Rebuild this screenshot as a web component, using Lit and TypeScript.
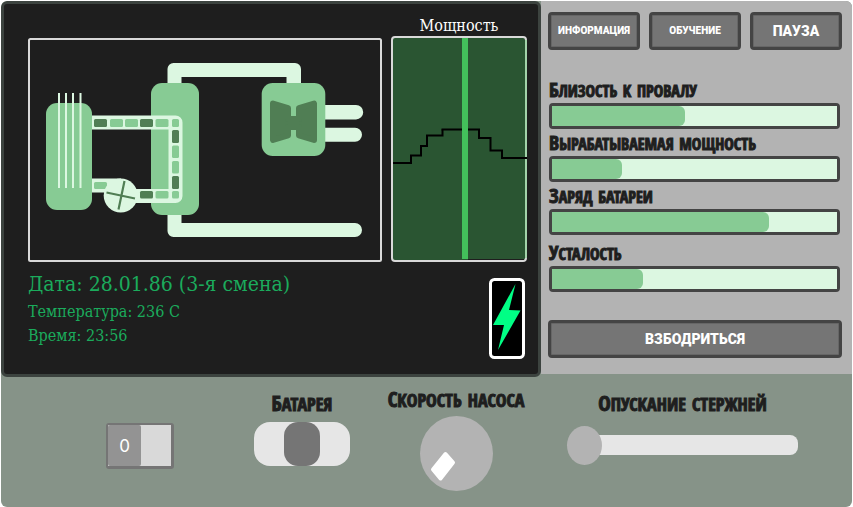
import { LitElement, html, svg, css } from "lit";
import { customElement, property } from "lit/decorators.js";

interface Gauge {
  id: string;
  label: string;
  value: number;
}

const GAUGES: Gauge[] = [
  { id: "failure", label: "Близость к провалу", value: 46.5 },
  { id: "output", label: "Вырабатываемая мощность", value: 24.5 },
  { id: "charge", label: "Заряд батареи", value: 76 },
  { id: "fatigue", label: "Усталость", value: 32 },
];

// x, y, width, height, dark
const CELLS: [number, number, number, number, boolean][] = [
  [94, 119, 13, 8, true],
  [110, 119, 13, 8, false],
  [125, 119, 13, 8, false],
  [140, 119, 13, 8, true],
  [155.5, 119, 13, 8, false],
  [172, 119, 7, 8, false],
  [172, 130, 7, 13, true],
  [172, 145.5, 7, 12.5, false],
  [172, 161, 7, 12.5, false],
  [172, 176, 7, 13, true],
  [172, 191, 7, 7.5, false],
  [155.5, 191, 13, 7.5, false],
  [140, 191, 13, 7.5, true],
  [94, 182, 13, 7, false],
];

@customElement("reactor-diagram")
export class ReactorDiagram extends LitElement {
  static styles = css`
    :host { display: block; }
    .art { display: block; width: 100%; height: auto; }
  `;
  render() {
    return html`<svg class="art" viewBox="28 38 354 224" role="img" aria-label="Схема реактора">
      <rect x="29" y="39" width="352" height="222" rx="1.5" fill="none" stroke="#d9d9d9" stroke-width="2" />
      <path fill="#dcf7e1" d="M167.5 84V69a6 6 0 0 1 6-6H295a6 6 0 0 1 6 6V84H286.500V77H181.500V84Z" />
      <path fill="#dcf7e1" d="M167.500 214V231a6 6 0 0 0 6 6H355a7 7 0 0 0 0-14H181.500V214Z" />
      <rect x="151" y="83" width="48" height="132" rx="11" fill="#87cb94" />
      <rect x="46" y="103" width="46" height="107" rx="11" fill="#87cb94" />
      <path d="M59 93V188M66 93V188M73 93V188M80.500 93V188" stroke="#dcf7e1" stroke-width="2" />
      <path d="M92 122.500H175.500V196H125" fill="none" stroke="#dcf7e1" stroke-width="14" stroke-linejoin="round" />
      <path d="M92 178.500H121V192.500H92Z" fill="#dcf7e1" />
      ${CELLS.map(([x, y, w, h, dark]) => svg`<rect x=${x} y=${y} width=${w} height=${h} rx="1.500" fill=${dark ? "#507e54" : "#87cb94"} />`)}
      <circle cx="120.700" cy="195.500" r="17" fill="#dcf7e1" />
      <path d="M106.500 192.500L135 198.500M124.500 181L118.500 209.500" stroke="#507e54" stroke-width="2.200" />
      <path d="M325 105H356a7.200 7.200 0 0 1 0 14.400H325ZM325 127.700H355a7 7 0 0 1 0 14H325Z" fill="#dcf7e1" />
      <rect x="261.700" y="83" width="63.600" height="73" rx="11" fill="#87cb94" />
      <path d="M273 103.500L288 108V119H299V108L314 103.500V140L299 135.500V127H288V135.500L273 140Z" fill="#507e54" stroke="#507e54" stroke-width="6" stroke-linejoin="round" />
      <path d="M291 98V116H296V98ZM291 130V144H296V130Z" fill="#87cb94" />
    </svg>`;
  }
}

@customElement("power-graph")
export class PowerGraph extends LitElement {
  static styles = css`
    :host { display: block; }
    .art { display: block; width: 100%; height: auto; }
  `;
  render() {
    return html`<svg class="art" viewBox="391 36 136 226" role="img" aria-label="График мощности">
      <rect x="392" y="37" width="134" height="224" rx="3" fill="#2a5532" stroke="#d9d9d9" stroke-width="2" />
      <path d="M526 40V258" stroke="#a3d3aa" stroke-width="2" />
      <path d="M468 259.500H524" stroke="#1e1e1e" />
      <path d="M393 163H411V155.500H421V146H427V135.500H442.500V129.500" fill="none" stroke="#000" stroke-width="2" />
      <path d="M441.500 129.500H479V138H490.500V150.500H502V158H527" fill="none" stroke="#000" stroke-width="2" />
      <rect x="462" y="38" width="6" height="221" fill="#43c05b" />
    </svg>`;
  }
}

@customElement("gauge-bar")
export class GaugeBar extends LitElement {
  @property() label = "";
  @property({ type: Number }) value = 0;
  static styles = css`
    :host { display: flex; flex-direction: column; gap: 2px; }
    .label {
      display: block;
      height: 20px;
      font: 800 23px/14px "Open Sans Condensed", "Liberation Sans Narrow", "Noto Sans", sans-serif;
      font-variant: small-caps;
      color: #1e1e1e;
      -webkit-text-stroke: 1px #1e1e1e;
      white-space: nowrap;
    }
    .label::first-letter { font-size: 20px; }
    .bar {
      appearance: none;
      display: block;
      box-sizing: border-box;
      width: 100%;
      height: 26px;
      border: 3px solid #444;
      border-radius: 4px;
      background: #dcf7e1;
    }
    .bar::-webkit-progress-bar { background: #dcf7e1; }
    .bar::-webkit-progress-value { background: #87cb94; border-radius: 0 6px 6px 0; }
  `;
  render() {
    return html`<label class="label" for="bar">${this.label}</label>
      <progress class="bar" id="bar" max="100" .value=${this.value}></progress>`;
  }
}

@customElement("app-root")
export class AppRoot extends LitElement {
  static styles = css`
    :host {
      display: block;
      box-sizing: border-box;
      min-height: 100vh;
      padding: 1px 1px 0;
      background: #fff;
      font-family: Roboto, "Open Sans", sans-serif;
      color: #1e1e1e;
    }
    .console {
      min-height: calc(100vh - 1px);
      border-radius: 6px;
      background: #869388;
      overflow: hidden;
    }
    .top { display: grid; grid-template-columns: 540fr 311fr; align-items: start; }
    .screen {
      box-sizing: border-box;
      padding: 11px 11px 15px 24px;
      border: 3px solid #3c433f;
      border-radius: 6px;
      background: #1e1e1e;
    }
    .displays { display: grid; grid-template-columns: 354fr 136fr; column-gap: 9px; align-items: end; }
    .title {
      margin: 0;
      font: 400 16px/21px "DejaVu Serif Condensed", "DejaVu Serif", serif;
      text-align: center;
      color: #fff;
    }
    .readout { display: flex; justify-content: space-between; align-items: flex-end; padding: 10px 2px 0 0; }
    .facts {
      margin: 0;
      align-self: flex-start;
      font: 400 16px/24px "DejaVu Serif Condensed", "DejaVu Serif", serif;
      color: #1bab5c;
    }
    .fact { margin: 0; white-space: nowrap; }
    .date { margin-bottom: 4px; font-size: 21px; }
    .battery { display: block; width: 36px; height: 81px; margin-top: 6px; }

    .side {
      box-sizing: border-box;
      min-height: 373px;
      padding: 11px 10px 16px 7px;
      background: #b3b3b3;
      display: flex;
      flex-direction: column;
    }
    .menu { display: grid; grid-template-columns: repeat(3, 1fr); gap: 9px; }
    .button {
      box-sizing: border-box;
      height: 38px;
      padding: 0;
      border: 3px solid #444;
      border-radius: 4px;
      background: #757575;
      box-shadow: inset 0 0 0 1px #666;
      font: 900 14px/20px Roboto, sans-serif;
      text-transform: uppercase;
      color: #fff;
    }
    .small { font-size: 10px; }
    .gauges { display: flex; flex-direction: column; gap: 5px; margin: 31px 2px 28px 1px; }
    .last { margin-top: 4px; }

    .controls {
      display: grid;
      grid-template-columns: minmax(0, 160fr) minmax(0, 164fr) minmax(0, 144fr) minmax(0, 309fr);
      align-items: start;
      padding: 13px 15px 15px 59px;
    }
    .control { display: flex; flex-direction: column; align-items: center; }
    .lowered { margin-top: 4px; }
    .name {
      display: block;
      height: 20px;
      font: 800 25px/14px "Open Sans Condensed", "Liberation Sans Narrow", "Noto Sans", sans-serif;
      font-variant: small-caps;
      -webkit-text-stroke: 1px #1e1e1e;
      white-space: nowrap;
    }
    .name::first-letter { font-size: 21px; }

    .switch {
      box-sizing: border-box;
      display: flex;
      justify-self: center;
      width: 68px;
      height: 46px;
      margin-top: 33px;
      border: 2px solid #757575;
      border-right-width: 3px;
      border-bottom-width: 3px;
      border-radius: 3px;
      background: #d9d9d9;
    }
    .check { appearance: none; width: 0; height: 0; margin: 0; }
    .knob {
      width: 33px;
      border-radius: 2px;
      background: #939393;
      font: 400 17px/42px Inter, sans-serif;
      text-align: center;
      color: #fff;
    }

    .tri {
      appearance: none;
      width: 96px;
      height: 44px;
      margin: 8px 0 0;
      border-radius: 16px;
      background: #e6e6e6;
    }
    .tri::-webkit-slider-thumb {
      appearance: none;
      width: 36px;
      height: 44px;
      border-radius: 14px;
      background: #757575;
    }

    .dial { position: relative; width: 73px; height: 75px; margin-top: 6px; }
    .face { display: block; width: 100%; height: 100%; }
    .turn { position: absolute; inset: 0; width: 100%; height: 100%; margin: 0; opacity: 0; }

    .rods { appearance: none; width: 75%; height: 39px; margin: 11px 0 0; background: none; }
    .rods::-webkit-slider-runnable-track {
      height: 20px;
      border-radius: 8px;
      background: linear-gradient(to right, transparent 17px, #e6e6e6 17px);
    }
    .rods::-webkit-slider-thumb {
      appearance: none;
      width: 35px;
      height: 39px;
      margin-top: -9px;
      border-radius: 50%;
      background: #b3b3b3;
    }
  `;

  render() {
    return html`<main class="console">
      <div class="top">
        <section class="screen">
          <div class="displays">
            <reactor-diagram></reactor-diagram>
            <div>
              <h2 class="title">Мощность</h2>
              <power-graph></power-graph>
            </div>
          </div>
          <div class="readout">
            <div class="facts">
              <p class="fact date">Дата: 28.01.86 (3-я смена)</p>
              <p class="fact">Температура: 236 С</p>
              <p class="fact">Время: 23:56</p>
            </div>
            <svg class="battery" viewBox="0 0 36 81" role="img" aria-label="Батарея заряжается">
              <rect x="1.500" y="1.500" width="33" height="78" rx="4" fill="#000" stroke="#fff" stroke-width="3" />
              <path d="M26.500 6L20 32L31.500 32.500L9 72L15 47H4Z" fill="#00ff85" />
            </svg>
          </div>
        </section>
        <section class="side">
          <nav class="menu">
            <button class="button small">Информация</button>
            <button class="button small">Обучение</button>
            <button class="button">Пауза</button>
          </nav>
          <div class="gauges">
            ${GAUGES.map((g) => html`<gauge-bar class=${g.id === "fatigue" ? "last" : ""} .label=${g.label} .value=${g.value}></gauge-bar>`)}
          </div>
          <button class="button">Взбодриться</button>
        </section>
      </div>
      <section class="controls">
        <label class="switch"><input class="check" type="checkbox" aria-label="Выключатель" /><span class="knob">0</span></label>
        <div class="control lowered">
          <label class="name" for="battery">Батарея</label>
          <input class="tri" id="battery" type="range" min="0" max="2" value="1" />
        </div>
        <div class="control">
          <label class="name" for="pump">Скорость насоса</label>
          <div class="dial">
            <svg class="face" viewBox="0 0 73 75" aria-hidden="true">
              <ellipse cx="36.500" cy="37.500" rx="36.500" ry="37.500" fill="#b3b3b3" />
              <path d="M25.500 38L33 46.500L20.500 62.500L13 53.500Z" fill="#fff" stroke="#fff" stroke-width="4" stroke-linejoin="round" />
            </svg>
            <input class="turn" id="pump" type="range" min="0" max="10" value="0" />
          </div>
        </div>
        <div class="control lowered">
          <label class="name" for="rods">Опускание стержней</label>
          <input class="rods" id="rods" type="range" min="0" max="100" value="0" />
        </div>
      </section>
    </main>`;
  }
}
